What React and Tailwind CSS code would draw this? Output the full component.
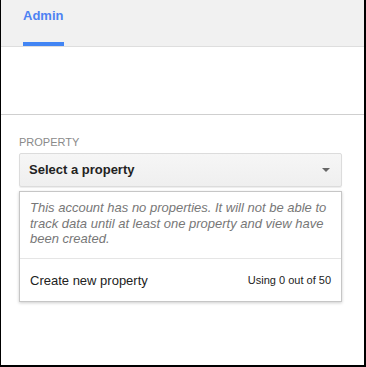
export default function App() {
  return (
    <div className="w-[366px] h-[367px] bg-white border-l border-r-2 border-b-2 border-black font-['Liberation_Sans',Arial,sans-serif] overflow-hidden">
      <div className="h-[47px] bg-[#f1f1f1] border-b border-[#dedede] pl-[22px] flex">
        <div className="flex flex-col justify-between w-[41px]">
          <span className="pt-[8px] text-[13px] font-bold leading-[16px] text-[#4d82f3]">Admin</span>
          <div className="h-[4px] bg-[#4285f4]"></div>
        </div>
      </div>
      <div className="h-[68px] border-b border-[#cfcfcf]"></div>
      <div className="pl-[18px] pr-[22px] pt-[20px]">
        <div className="text-[11px] leading-[14px] text-[#8a8a8a] uppercase">Property</div>
        <div className="mt-[4px] h-[34px] rounded-[2px] border border-[#dcdcdc] bg-gradient-to-b from-[#f6f6f6] to-[#efefef] shadow-[0_1px_1px_rgba(0,0,0,0.08)] flex items-center justify-between pl-[9px] pr-[11px]">
          <span className="text-[13px] font-bold text-[#222]">Select a property</span>
          <svg width="8" height="4" viewBox="0 0 8 4">
            <path d="M0 0h8L4 4z" fill="#666" />
          </svg>
        </div>
        <div className="mt-[4px] border border-[#c6c6c6] bg-white shadow-[0_1px_3px_rgba(0,0,0,0.2)]">
          <div className="pl-[10px] pr-[6px] pt-[8px] pb-[11px] border-b border-[#e5e5e5]">
            <p className="text-[13px] leading-[15.5px] italic text-[#777] whitespace-nowrap">
              This account has no properties. It will not be able to<br />
              track data until at least one property and view have<br />
              been created.
            </p>
          </div>
          <div className="h-[42px] pl-[10px] pr-[10px] pt-[2px] flex items-center justify-between">
            <span className="text-[13px] text-[#222]">Create new property</span>
            <span className="text-[11px] text-[#222]">Using 0 out of 50</span>
          </div>
        </div>
      </div>
    </div>
  );
}
